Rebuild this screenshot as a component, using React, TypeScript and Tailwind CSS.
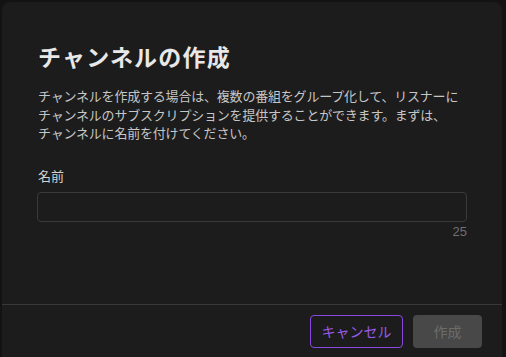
import React from "react";

const jp = "font-['Hiragino_Sans','Noto_Sans_CJK_JP',sans-serif]";

export default function App() {
  return (
    <div className={`w-[506px] h-[357px] overflow-hidden bg-[#131313] pt-[2px] pl-[2px] ${jp}`}>
      {/* Modal */}
      <div className="w-[500px] h-[400px] rounded-t-[8px] bg-[#1c1c1c] flex flex-col">
        <div className="px-[36px] pt-[38px]">
          <h1 className="text-[23px] leading-[32px] font-semibold text-[#e8e8e8] tracking-[1.2px]">
            チャンネルの作成
          </h1>
          <p className="mt-[15px] text-[13px] leading-[18.5px] text-[#c6c6c6] tracking-[-0.2px]">
            チャンネルを作成する場合は、複数の番組をグループ化して、リスナーに
            <br />
            チャンネルのサブスクリプションを提供することができます。まずは、
            <br />
            チャンネルに名前を付けてください。
          </p>

          <label className="block mt-[24px] mb-[7px] text-[13px] leading-[18px] text-[#d2d2d2]">
            名前
          </label>
          <input
            type="text"
            className="block w-[430px] h-[30px] -ml-[1px] rounded-[4px] border border-[#3a3a3a] bg-[#1c1c1c] px-2 text-[13px] text-[#e8e8e8] outline-none"
          />
          <div className="w-[429px] mt-[2px] text-right text-[13px] leading-[16px] text-[#707070] font-['Liberation_Sans',sans-serif]">
            25
          </div>
        </div>

        {/* Footer */}
        <div className="mt-[64px] border-t border-[#383838] pt-[10px] pr-[20px] flex justify-end gap-[10px]">
          <button className="w-[93px] h-[33px] rounded-[4px] border border-[#8a48e0] text-[14px] text-[#9a5ae8]">
            キャンセル
          </button>
          <button className="w-[69px] h-[33px] rounded-[4px] bg-[#484848] text-[14px] text-[#6c6c6c]">
            作成
          </button>
        </div>
      </div>
    </div>
  );
}
